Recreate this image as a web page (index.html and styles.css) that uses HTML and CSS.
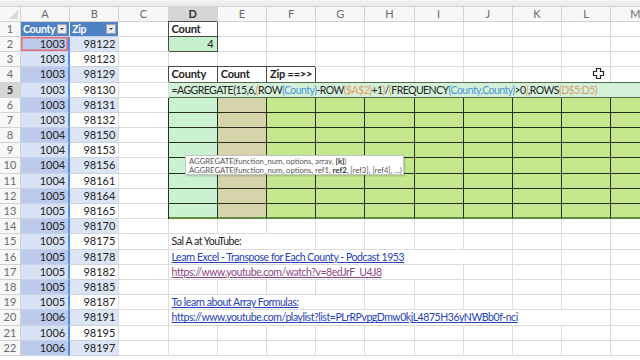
FILE: index.html
```html
<!DOCTYPE html>
<html lang="en">
    <head>
        <meta charset="UTF-8" />
        <title>Transpose for Each County</title>
        <link rel="stylesheet" href="styles.css">
    </head>
    <body>
        <div class="sheet" id="sheet">
            <div class="topbar"></div>

            <div class="tooltip">
                <div>AGGREGATE(function_num, options, array, <b>[k]</b>)</div>
                <div>AGGREGATE(function_num, options, ref1, <b>ref2</b>, [ref3], [ref4], ...)</div>
            </div>

            <svg class="cursor" width="13" height="13" viewBox="0 0 13 13">
                <path d="M4.5 1.5h4v3h3v4h-3v3h-4v-3h-3v-4h3z" fill="#fff" stroke="#222" stroke-width="1.2"/>
            </svg>
        </div>
        <script src="script.js"></script>
    </body>
</html>
```

FILE: styles.css
```css
body {
    margin: 0;
    background: #fff;
    font: 11px Lato, "Liberation Sans", sans-serif;
    color: #222;
    overflow: hidden;
}
.sheet {
    position: relative;
    width: 640px;
    height: 360px;
    overflow: hidden;
}
.topbar {
    height: 7px;
    box-sizing: border-box;
    background: linear-gradient(#f4f4f4, #e9e9e9);
    border-bottom: 1px solid #d4d4d4;
}
.row {
    display: grid;
    grid-template-columns: 21px repeat(13, 49.2px);
    height: 15.2px;
}
.row.heads {
    height: 14.8px;
    background: #f7f7f7;
}
.cell {
    box-sizing: border-box;
    border-right: 1px solid #dcdcdc;
    border-bottom: 1px solid #dcdcdc;
    padding: 0 3px;
    line-height: 14px;
    white-space: nowrap;
    min-width: 0;
}
.num {
    text-align: right;
}

/* headers */
.colhead,
.rowhead {
    color: #6a6a6a;
    text-align: center;
    padding: 0;
    border-color: #d2d2d2;
}
.rowhead {
    background: #f7f7f7;
}
.active {
    background: #d6d6d6;
    color: #333;
    font-weight: bold;
}
.corner {
    position: relative;
}
.corner::after {
    content: "";
    position: absolute;
    right: 2px;
    bottom: 2px;
    border-left: 9px solid transparent;
    border-bottom: 9px solid #dadada;
}

/* county / zip table */
.th {
    background: #4f81c7;
    color: #fff;
    font-weight: bold;
    font-size: 10.5px;
    letter-spacing: -0.3px;
    display: flex;
    justify-content: space-between;
    align-items: center;
    padding: 0 2px;
    border-right-color: #fff;
    border-bottom-color: #c5cfe3;
}
.filter {
    width: 8px;
    height: 8px;
    flex: none;
    background: #e9e9e9;
    border: 1px solid #9aa6b8;
    position: relative;
}
.filter::after {
    content: "";
    position: absolute;
    left: 2px;
    top: 3px;
    border-left: 2px solid transparent;
    border-right: 2px solid transparent;
    border-top: 2px solid #444;
}
.cty {
    border-right: 2px solid #5b8ede;
    border-bottom-color: #c7d3ea;
}
.cty.even {
    background: #bccbeb;
}
.cty.odd {
    background: #d8e2f5;
}
.zip {
    border-bottom-color: #ccd3df;
}
.zip.even {
    background: #dce5f3;
}
.ref-a2 {
    box-shadow: inset 0 0 0 1.5px #e56c6c;
}

/* framed cells */
.frame {
    border-right-color: #4a4a4a;
    border-bottom-color: #4a4a4a;
    box-shadow: -1px -1px 0 #4a4a4a;
}
.bold {
    font-weight: bold;
    letter-spacing: -0.2px;
}
.okgreen {
    background: #c6efce;
}

/* formula being edited in D5 */
.edit {
    grid-column: 5 / -1;
    background: #d4f0d9;
    border-bottom: 1px solid #4d6e4a;
    box-shadow: 0 -1px 0 #4d6e4a;
    padding-left: 3px;
    font-size: 10.5px;
    letter-spacing: -0.55px;
}
.f-bl {
    color: #4a97d6;
}
.f-or {
    color: #e59c62;
}
.f-tn {
    color: #d2a06e;
}

/* result block */
.res-d,
.res-e,
.res-f {
    border-right-color: #27301c;
    border-bottom-color: #27301c;
}
.res-d {
    background: #caf1d2;
    box-shadow: -1px 0 0 #27301c;
}
.res-e {
    background: #d5d4aa;
}
.res-f {
    background: #c5e88f;
}
.last .res-d,
.last .res-e,
.last .res-f {
    border-bottom: 2px solid #5f8c3d;
}

/* notes and links */
.note {
    border-right: none;
    font-size: 10.5px;
    letter-spacing: -0.45px;
}
.link {
    color: #2441b8;
    text-decoration: underline;
}
.visited {
    color: #8e4585;
    text-decoration: underline;
}

/* overlays */
.tooltip {
    position: absolute;
    left: 185px;
    top: 155px;
    width: 219px;
    height: 20px;
    box-sizing: border-box;
    background: #fff;
    border: 1px solid #c4c4c4;
    box-shadow: 1px 1px 2px rgba(0, 0, 0, 0.2);
    padding: 1px 3px;
    font-size: 7.7px;
    line-height: 8.6px;
    color: #555;
    white-space: nowrap;
}
.tooltip b {
    color: #333;
}
.cursor {
    position: absolute;
    left: 592px;
    top: 67px;
}
```

FILE: script.js
```js
const sheet = document.getElementById('sheet'),
      tooltip = document.querySelector('.tooltip'),
      letters = 'ABCDEFGHIJKLM'.split('');

const table = [
    [1003, 98122], [1003, 98123], [1003, 98129], [1003, 98130], [1003, 98131],
    [1003, 98132], [1004, 98150], [1004, 98153], [1004, 98156], [1004, 98161],
    [1005, 98164], [1005, 98165], [1005, 98170], [1005, 98175], [1005, 98178],
    [1005, 98182], [1005, 98185], [1005, 98187], [1006, 98191], [1006, 98195],
    [1006, 98197]
];

const formula = '=AGGREGATE(15,6,<span class="f-or">(</span>ROW<span class="f-bl">(County)</span>-ROW<span class="f-or">($A$2)</span>+1<span class="f-or">)</span>/<span class="f-or">(</span>FREQUENCY<span class="f-bl">(County,County)</span>&gt;0<span class="f-or">)</span>,ROWS<span class="f-tn">(D$5:D5)</span>';

// text in column D that runs over the next columns: [html, class, columns spanned]
const notes = {
    15: ['Sal A at YouTube:', '', 2],
    16: ['Learn Excel - Transpose for Each County - Podcast 1953', 'link', 6],
    17: ['https://www.youtube.com/watch?v=8edJrF_U4J8', 'visited', 5],
    19: ['To learn about Array Formulas:', 'link', 3],
    20: ['https://www.youtube.com/playlist?list=PLrRPvpgDmw0kjL4875H36yNWBb0f-nci', 'link', 8]
};

function cell(cls, html) {
    let d = document.createElement('div');
    d.className = 'cell ' + cls;
    if (html !== undefined) d.innerHTML = html;
    return d;
}

// column letters
let heads = document.createElement('div');
heads.className = 'row heads';
heads.appendChild(cell('colhead corner'));
letters.forEach(l => heads.appendChild(cell('colhead' + (l == 'D' ? ' active' : ''), l)));
sheet.insertBefore(heads, tooltip);

for (let r = 1; r <= 22; r++) {
    let row = document.createElement('div');
    row.className = 'row' + (r == 13 ? ' last' : '');
    row.appendChild(cell('rowhead' + (r == 5 ? ' active' : ''), r));

    // A and B
    if (r == 1) {
        row.appendChild(cell('th', 'County<span class="filter"></span>'));
        row.appendChild(cell('th', 'Zip<span class="filter"></span>'));
    } else {
        let [county, zip] = table[r - 2],
            band = r % 2 ? 'odd' : 'even';
        row.appendChild(cell('num cty ' + band + (r == 2 ? ' ref-a2' : ''), county));
        row.appendChild(cell('num zip ' + band, zip));
    }
    row.appendChild(cell(''));

    // D to M
    if (r == 5) {
        row.appendChild(cell('edit', formula));
    } else if (notes[r]) {
        let [html, cls, span] = notes[r],
            note = cell('note ' + cls, html);
        note.style.gridColumn = 'span ' + span;
        row.appendChild(note);
        for (let c = 3 + span; c < letters.length; c++) row.appendChild(cell(''));
    } else {
        for (let c = 3; c < letters.length; c++) {
            let cls = '', html;
            if (r == 1 && c == 3) { cls = 'frame bold'; html = 'Count'; }
            if (r == 2 && c == 3) { cls = 'frame num okgreen'; html = '4'; }
            if (r == 4 && c < 6) {
                cls = 'frame bold';
                html = ['County', 'Count', 'Zip ==&gt;&gt;'][c - 3];
            }
            if (r >= 6 && r <= 13) cls = c == 3 ? 'res-d' : c == 4 ? 'res-e' : 'res-f';
            row.appendChild(cell(cls, html));
        }
    }
    sheet.insertBefore(row, tooltip);
}
```
